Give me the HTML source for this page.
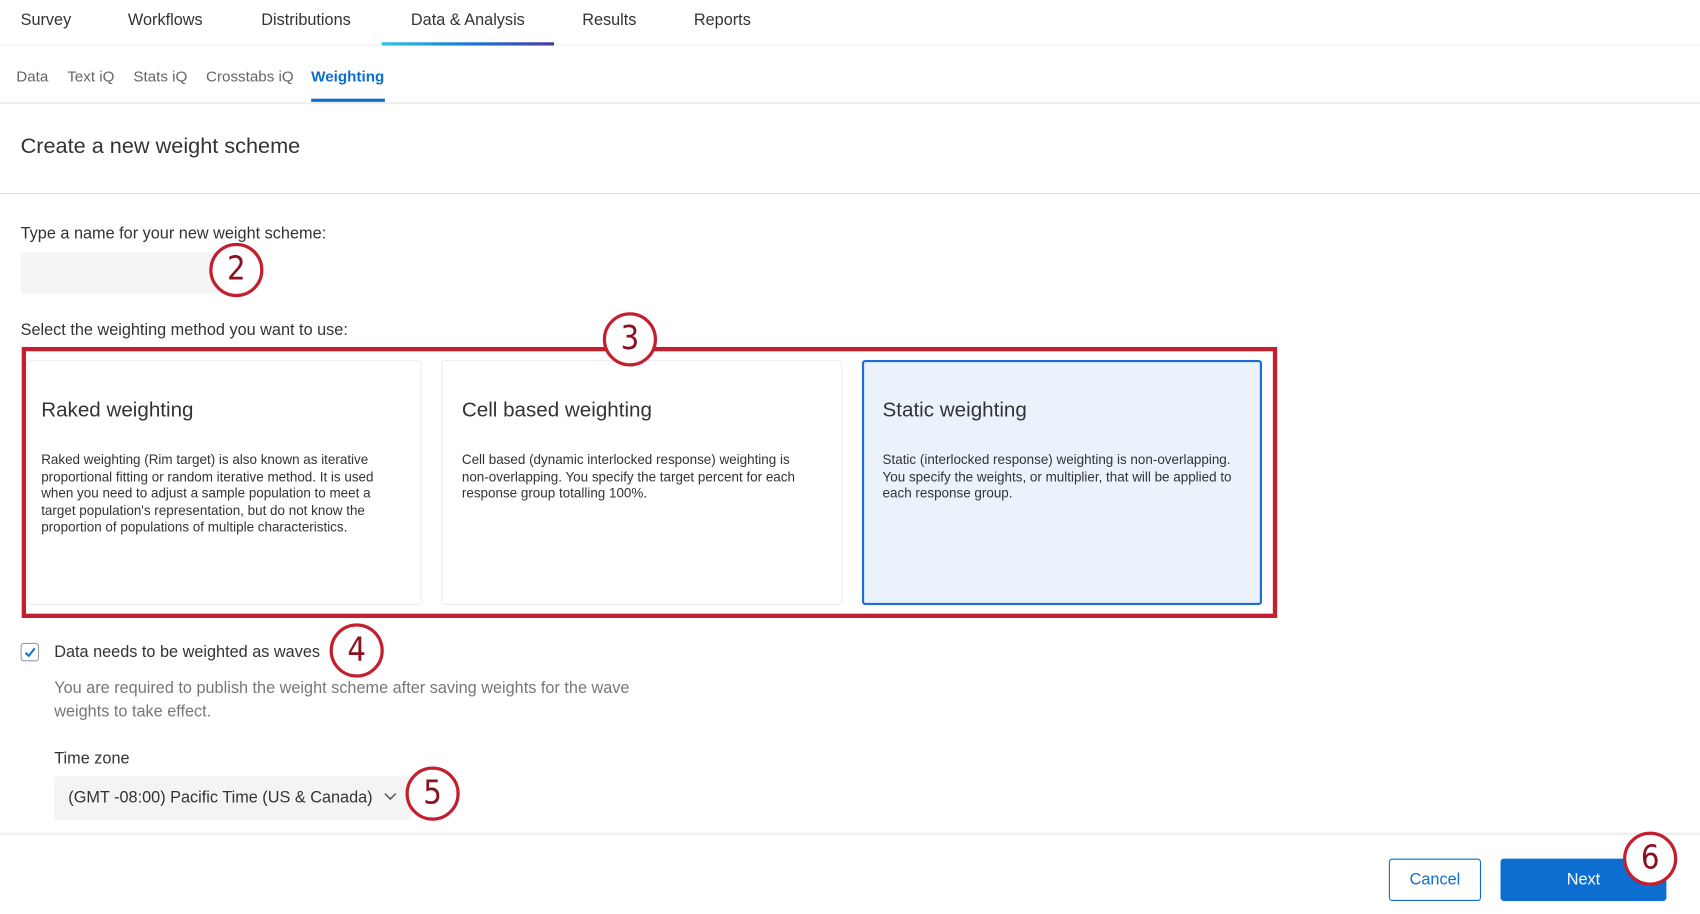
<!DOCTYPE html>
<html><head><meta charset="utf-8"><style>
html,body{margin:0;padding:0;background:#fff;width:1700px;height:914px;overflow:hidden}
#s{position:absolute;left:0;top:0;width:1568px;height:843px;transform:scale(1.0842);transform-origin:0 0;font-family:"Liberation Sans",sans-serif;color:#333}
.a{position:absolute;white-space:nowrap}
.nav{font-size:15px;top:10px;color:#333}
.sub{font-size:14px;top:62px;color:#666}
.c{position:absolute;width:50px;height:50px;border:3px solid #c3202f;border-radius:50%;box-sizing:border-box;background:#fff;color:#8b1020;font-size:30px;line-height:44px;text-align:center;font-family:"DejaVu Sans Condensed","Liberation Sans Narrow",sans-serif}
.card{position:absolute;top:332px;height:226px;box-sizing:border-box;border:1px solid #eee;border-radius:3px;background:#fff}
.card h3{position:absolute;left:12px;top:35px;margin:0;font-weight:normal;font-size:19px;color:#333}
.card p{position:absolute;left:12px;top:84px;margin:0;font-size:12.4px;line-height:15.6px;width:330px;color:#333;white-space:normal}
</style></head><body><div id="s">
<div class="a nav" style="left:19px">Survey</div>
<div class="a nav" style="left:118px">Workflows</div>
<div class="a nav" style="left:241px">Distributions</div>
<div class="a nav" style="left:379px">Data &amp; Analysis</div>
<div class="a nav" style="left:537px">Results</div>
<div class="a nav" style="left:640px">Reports</div>
<div class="a" style="left:0;top:41px;width:1568px;height:1px;background:#eee"></div>
<div class="a" style="left:352px;top:39px;width:159px;height:3px;background:linear-gradient(90deg,#2fc6e0,#1a78d6,#4b3aa8)"></div>
<div class="a sub" style="left:15px">Data</div>
<div class="a sub" style="left:62px">Text iQ</div>
<div class="a sub" style="left:123px">Stats iQ</div>
<div class="a sub" style="left:190px">Crosstabs iQ</div>
<div class="a sub" style="left:287px;color:#0b6ed0;font-weight:bold">Weighting</div>
<div class="a" style="left:287px;top:91px;width:68px;height:3px;background:#0b6ed0"></div>
<div class="a" style="left:0;top:94px;width:1568px;height:2px;background:#eee"></div>
<div class="a" style="left:19px;top:124px;font-size:20px">Create a new weight scheme</div>
<div class="a" style="left:0;top:178px;width:1568px;height:1px;background:#e4e4e4"></div>
<div class="a" style="left:19px;top:207px;font-size:15px">Type a name for your new weight scheme:</div>
<div class="a" style="left:19px;top:233px;width:190px;height:38px;background:#f4f4f4;border-radius:3px"></div>
<div class="c" style="left:193px;top:224px">2</div>
<div class="a" style="left:19px;top:296px;font-size:15px">Select the weighting method you want to use:</div>
<div class="a" style="left:20px;top:320px;width:1158px;height:250px;box-sizing:border-box;border:4px solid #c3202f"></div>
<div class="card" style="left:25px;width:364px"><h3>Raked weighting</h3><p>Raked weighting (Rim target) is also known as iterative proportional fitting or random iterative method. It is used when you need to adjust a sample population to meet a target population's representation, but do not know the proportion of populations of multiple characteristics.</p></div>
<div class="card" style="left:407px;width:370px"><h3 style="left:18px">Cell based weighting</h3><p style="left:18px">Cell based (dynamic interlocked response) weighting is non-overlapping. You specify the target percent for each response group totalling 100%.</p></div>
<div class="card" style="left:795px;width:369px;background:#eaf2fc;border:2px solid #1a6fd0"><h3 style="left:17px;top:34px">Static weighting</h3><p style="left:17px;top:83px">Static (interlocked response) weighting is non-overlapping. You specify the weights, or multiplier, that will be applied to each response group.</p></div>
<div class="c" style="left:556px;top:288px">3</div>
<div class="a" style="left:19px;top:593px;width:17px;height:17px;box-sizing:border-box;border:1px solid #999;border-radius:3px"><svg width="15" height="15" style="position:absolute;left:0;top:0"><path d="M3.5 8 L6.5 11 L12 4" fill="none" stroke="#0b6ed0" stroke-width="1.8"/></svg></div>
<div class="a" style="left:50px;top:593px;font-size:15px">Data needs to be weighted as waves</div>
<div class="c" style="left:304px;top:575px">4</div>
<div class="a" style="left:50px;top:624px;font-size:15px;line-height:22px;color:#777">You are required to publish the weight scheme after saving weights for the wave<br>weights to take effect.</div>
<div class="a" style="left:50px;top:691px;font-size:15px">Time zone</div>
<div class="a" style="left:50px;top:716px;width:330px;height:40px;background:#f4f4f4;border-radius:3px"></div>
<div class="a" style="left:63px;top:727px;font-size:15px">(GMT -08:00) Pacific Time (US &amp; Canada)</div>
<svg class="a" style="left:354px;top:731px" width="12" height="8"><path d="M1 1 L6 6 L11 1" fill="none" stroke="#555" stroke-width="1.4"/></svg>
<div class="c" style="left:374px;top:707px">5</div>
<div class="a" style="left:0;top:768px;width:1568px;height:2px;background:#eee"></div>
<div class="a" style="left:1281px;top:792px;width:85px;height:39px;box-sizing:border-box;border:1px solid #0b6ed0;border-radius:3px;color:#0b6ed0;font-size:15px;text-align:center;line-height:37px">Cancel</div>
<div class="a" style="left:1384px;top:792px;width:153px;height:39px;background:#0b6ed0;border-radius:3px;color:#fff;font-size:15px;text-align:center;line-height:39px">Next</div>
<div class="c" style="left:1497px;top:767px">6</div>
</div></body></html>
